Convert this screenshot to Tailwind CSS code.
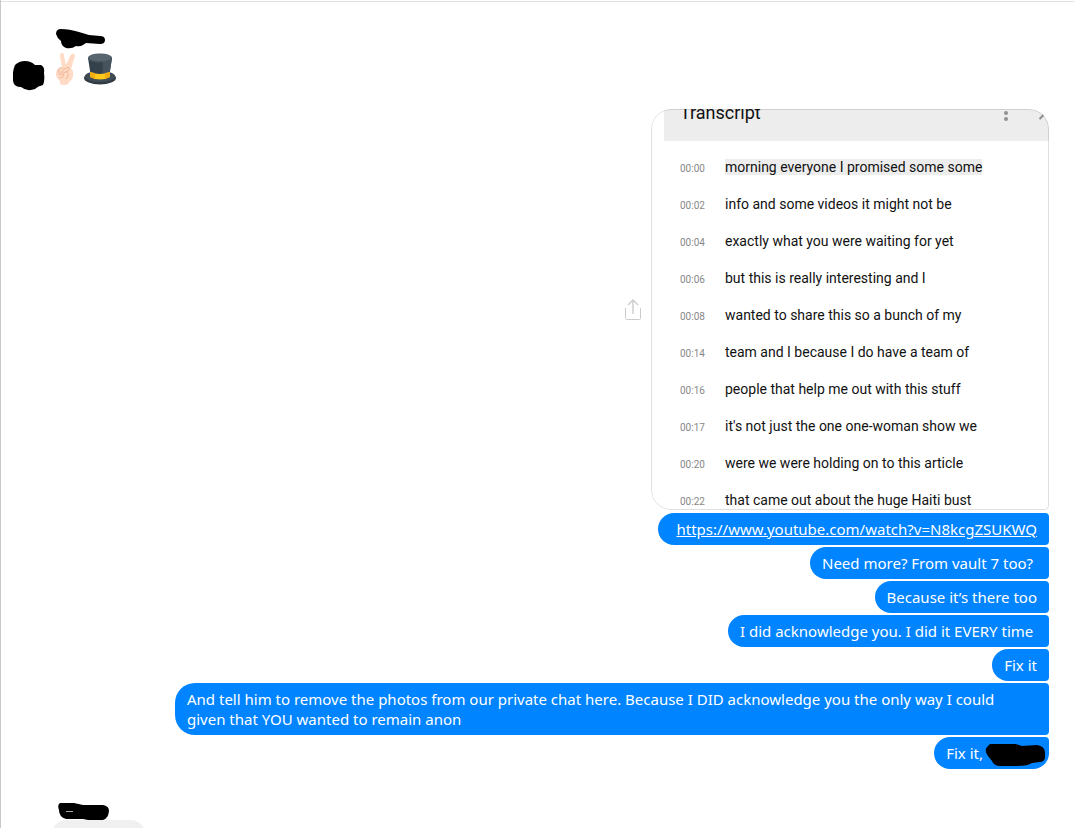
<!DOCTYPE html>
<html lang="en">
<head>
<meta charset="utf-8">
<meta name="viewport" content="width=device-width, initial-scale=1">
<title>Chat</title>
<script src="https://cdn.jsdelivr.net/npm/@tailwindcss/browser@4"></script>
</head>
<body class="bg-white">
<main class="h-screen overflow-hidden border-l border-[#c8c8c8] pt-px font-['Segoe_UI','Noto_Sans',sans-serif] text-[15px] leading-5">
  <div class="border-t border-[#e0e0e0]"></div>

  <section class="flex h-[107px] flex-col pt-[26px] pl-3">
    <svg class="ml-[42px] h-[22px] w-[51px] shrink-0" viewBox="0 0 51 22" role="img" aria-label="Redacted name">
      <path d="M6 1Q1 1 1 6Q2 10 6 13Q6 18 11 20Q17 21 21 18Q25 19 28 17L31 15L45 16Q50 16 50 12Q50 8 45 8L34 7L24 4Q14 1 6 1Z"/>
    </svg>
    <div class="flex items-start">
      <svg class="mt-[11px] h-8 w-8" viewBox="0 0 32 32" role="img" aria-label="Redacted avatar">
        <path d="M2 4Q6 0 12 0Q18 0 22 4L28 4Q32 6 31 12Q32 20 30 24Q25 25 22 28Q14 31 8 26Q1 26 0 20Q-1 11 2 4Z"/>
      </svg>
      <svg class="mt-[3px] ml-[9px] h-8 w-6" viewBox="0 0 24 32" role="img" aria-label="Victory hand">
        <path fill="#ffdac4" d="M6 3Q6 0 8 0Q10 0 10 3L12 12L16 3Q18 0 20 1Q22 2 20 6L17 16Q20 18 19 22Q19 27 15 29L14 31Q10 33 6 31V28Q2 25 2 21Q2 15 8 14Z"/>
        <g fill="none" stroke="#eeb696" stroke-linecap="round"><path d="M8 15Q5 14 4 18Q6 21 9 18M9 17L14 14Q17 16 14 18L9 20M13 19Q16 22 12 26M4 20Q5 23 8 21Q10 20 9 24L6 25"/></g>
      </svg>
      <svg class="mt-[3px] ml-1.5 h-8 w-8" viewBox="0 0 32 32" role="img" aria-label="Top hat">
        <ellipse cx="16" cy="25" rx="16" ry="6.500" fill="#303b43"/>
        <ellipse cx="16" cy="23.500" rx="15" ry="5.500" fill="#414d56"/>
        <path fill="#35414a" d="M4 5L7 24Q16 29 25 24L28 5Z"/>
        <path fill="#46535c" d="M19 8L18 27Q23 26 25 24L28 5Z"/>
        <path fill="#ffc91c" d="M6 19Q16 23 26 19V24Q16 29 6 24Z"/>
        <path fill="#f2ad13" d="M6 19L11 20V26L6 24ZM21 20L26 19V24L21 26Z"/>
        <ellipse cx="16" cy="5" rx="12" ry="4.500" fill="#4a5760"/>
        <ellipse cx="16" cy="4.500" rx="11" ry="3.500" fill="#59666f"/>
      </svg>
    </div>
  </section>

  <section class="flex flex-col items-end gap-0.5 pr-[25px] text-white">
    <div class="mb-px flex items-center gap-2.5">
      <button aria-label="Share" class="text-[#cccccc]">
        <svg class="h-[22px] w-4" viewBox="0 0 16 22" fill="none" stroke="currentColor"><path d="M.5 9V19.500Q.5 20.500 1.500 20.500H14.500Q15.500 20.500 15.500 19.500V9"/><path stroke-width="1.400" d="M8 15V1.500M3 6L8 1L13 6"/></svg>
      </button>
      <article class="relative h-[401px] w-[398px] overflow-hidden rounded-[20px] rounded-br-[4px] font-[Roboto,sans-serif] text-sm text-[#111111]">
        <header class="ml-[13px] flex h-8 items-start justify-between bg-[#ededed] pl-4">
          <h2 class="-mt-1.5 text-lg leading-5">Transcript</h2>
          <svg class="h-8 w-12" viewBox="0 0 48 32" fill="#909090"><circle cx="5" cy="4" r="2"/><circle cx="5" cy="10" r="2"/><path d="M38 9L42 5L43 7L39 11Z"/></svg>
        </header>
        <ol class="pt-2 pl-[29px] leading-[37px]">
          <li class="flex h-[37px]"><time class="w-[45px] pt-px text-[10px] text-[#888888]">00:00</time><p><span class="bg-[#ededed]">morning everyone I promised some some</span></p></li>
          <li class="flex h-[37px]"><time class="w-[45px] pt-px text-[10px] text-[#888888]">00:02</time><p>info and some videos it might not be</p></li>
          <li class="flex h-[37px]"><time class="w-[45px] pt-px text-[10px] text-[#888888]">00:04</time><p>exactly what you were waiting for yet</p></li>
          <li class="flex h-[37px]"><time class="w-[45px] pt-px text-[10px] text-[#888888]">00:06</time><p>but this is really interesting and I</p></li>
          <li class="flex h-[37px]"><time class="w-[45px] pt-px text-[10px] text-[#888888]">00:08</time><p>wanted to share this so a bunch of my</p></li>
          <li class="flex h-[37px]"><time class="w-[45px] pt-px text-[10px] text-[#888888]">00:14</time><p>team and I because I do have a team of</p></li>
          <li class="flex h-[37px]"><time class="w-[45px] pt-px text-[10px] text-[#888888]">00:16</time><p>people that help me out with this stuff</p></li>
          <li class="flex h-[37px]"><time class="w-[45px] pt-px text-[10px] text-[#888888]">00:17</time><p>it's not just the one one-woman show we</p></li>
          <li class="flex h-[37px]"><time class="w-[45px] pt-px text-[10px] text-[#888888]">00:20</time><p>were we were holding on to this article</p></li>
          <li class="flex h-[37px]"><time class="w-[45px] pt-px text-[10px] text-[#888888]">00:22</time><p>that came out about the huge Haiti bust</p></li>
        </ol>
        <div class="pointer-events-none absolute inset-0 rounded-[20px] rounded-br-[4px] border border-black/12"></div>
      </article>
    </div>
    <p class="min-w-[391px] rounded-l-2xl rounded-r bg-[#0084ff] px-3 py-1.5 text-right"><a class="underline" href="https://www.youtube.com/watch?v=N8kcgZSUKWQ">https://www.youtube.com/watch?v=N8kcgZSUKWQ</a></p>
    <p class="min-w-[239px] rounded-l-2xl rounded-r bg-[#0084ff] px-3 py-1.5">Need more? From vault 7 too?</p>
    <p class="rounded-l-2xl rounded-r bg-[#0084ff] px-3 py-1.5">Because it’s there too</p>
    <p class="min-w-[321px] rounded-l-2xl rounded-r bg-[#0084ff] px-3 py-1.5">I did acknowledge you. I did it EVERY time</p>
    <p class="rounded-l-2xl rounded-r bg-[#0084ff] px-3 py-1.5">Fix it</p>
    <p class="w-full max-w-[874px] rounded-l-[20px] rounded-r bg-[#0084ff] px-3 py-1.5">And tell him to remove the photos from our private chat here. Because I DID acknowledge you the only way I could<br>given that YOU wanted to remain anon</p>
    <p class="flex rounded-l-2xl rounded-tr rounded-br-2xl bg-[#0084ff] py-1.5 pr-1 pl-3">Fix it,
      <svg class="ml-0.5 -mb-1 h-6 w-[60px]" viewBox="0 0 60 24" role="img" aria-label="Redacted name"><path d="M5 1L31 1L37 3L52 2Q60 3 60 10V15Q59 19 55 19L47 20Q43 23 32 23L15 23Q9 23 7 18L3 13Q-1 8 2 4Z"/></svg>
    </p>
  </section>

  <section class="mt-[33px] flex flex-col items-start pl-[50px]">
    <svg class="ml-1.5 h-[18px] w-[53px]" viewBox="0 0 53 18" role="img" aria-label="Redacted name"><path d="M3 1L17 1L26 3H46Q52 4 52 9Q51 17 46 18H31L26 17H9Q2 15 2 8Q0 3 3 1Z"/><path d="M9 9.500H16" stroke="#aaaaaa" fill="none"/></svg>
    <div class="h-8 w-[95px] rounded-2xl bg-[#f1f0f0]"></div>
  </section>
</main>
</body>
</html>
